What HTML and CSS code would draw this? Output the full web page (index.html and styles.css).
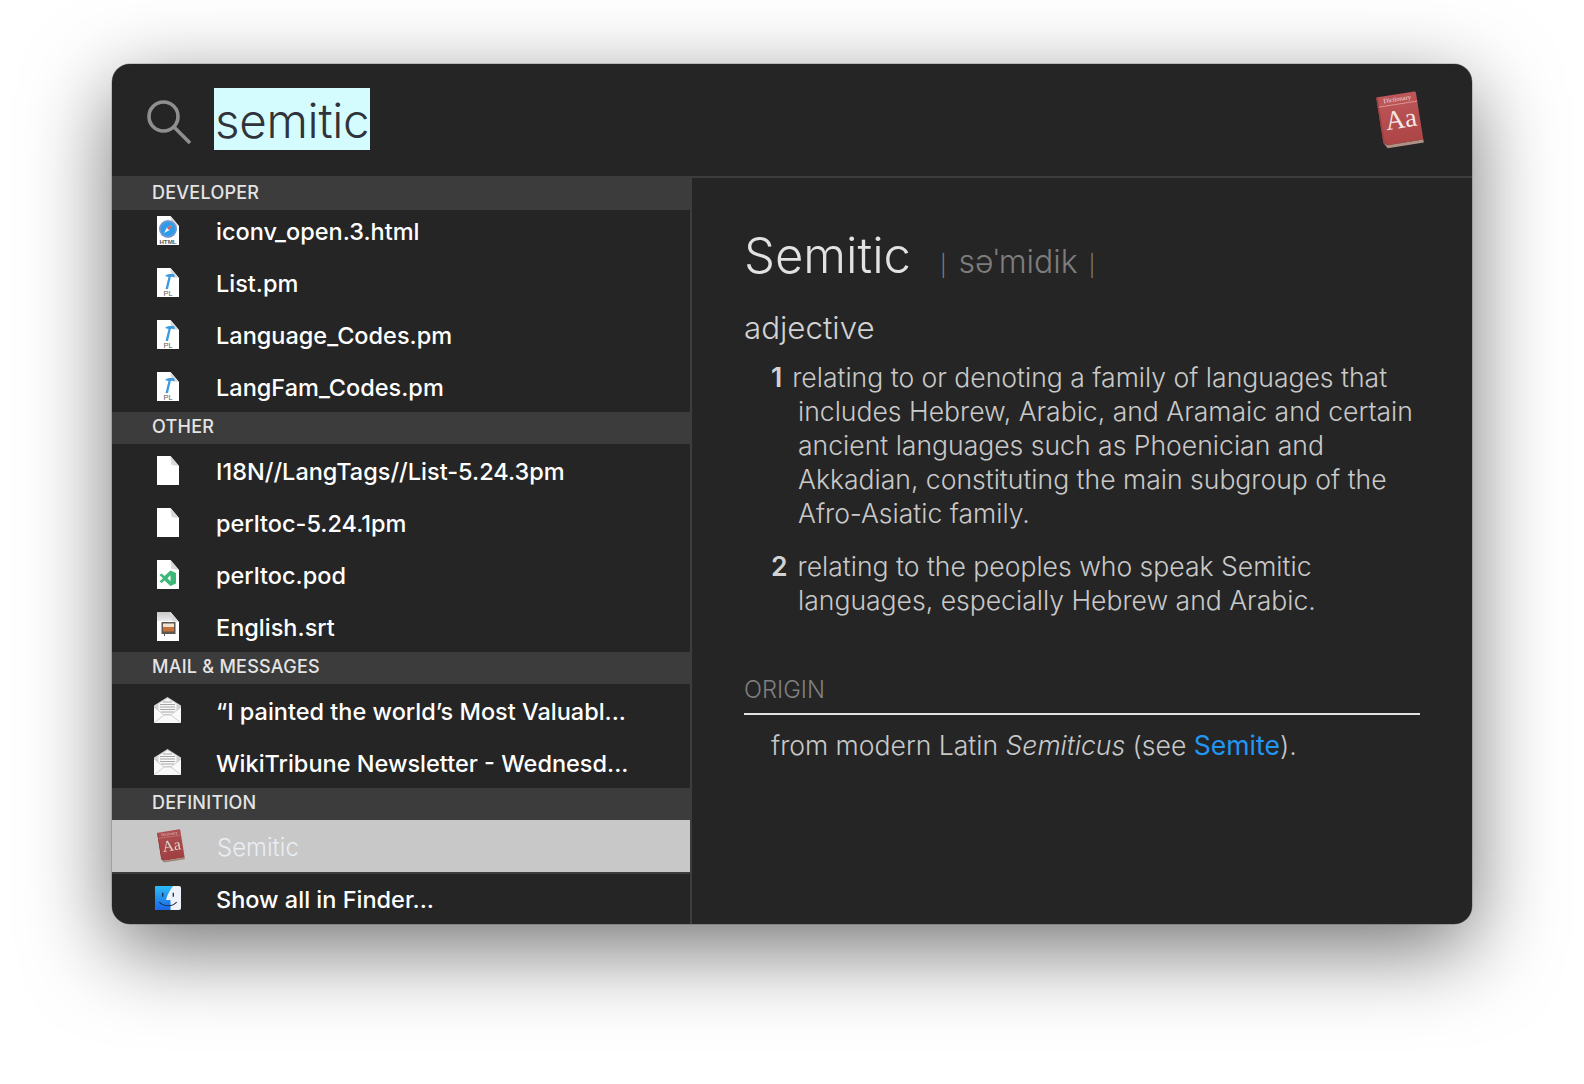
FILE: index.html
```html
<!DOCTYPE html>
<html lang="en">
<head>
<meta charset="utf-8">
<title>Spotlight</title>
<link rel="stylesheet" href="styles.css">
</head>
<body>
<svg class="defs" width="0" height="0" aria-hidden="true">
  <defs>
    <linearGradient id="bookFill" x1="0" y1="0" x2="0" y2="1"><stop offset="0" stop-color="#bd5759"/><stop offset="1" stop-color="#ad4547"/></linearGradient>
    <linearGradient id="finderBlue" x1="0" y1="0" x2="0" y2="1"><stop offset="0" stop-color="#2bbcf8"/><stop offset="1" stop-color="#1a66e6"/></linearGradient>
    <linearGradient id="srtTop" x1="0" y1="0" x2="0" y2="1"><stop offset="0" stop-color="#c8c8c8"/><stop offset="1" stop-color="#ececec"/></linearGradient>
    <symbol id="doc" viewBox="0 0 22 29"><path d="M0 0H13.500L22 10V29H0Z" fill="#fff"/><path d="M13.500 0L14.500 9L22 10Z" fill="#d8d8d8"/></symbol>
    <symbol id="hammer" viewBox="0 0 22 29">
      <path d="M8 8C10 6 14 5.500 17.500 6.500L17.500 9.500C16 8.500 15 8.500 13.800 9L11 21H8.500L11.500 9C10.500 8.500 9 8.500 8 8Z" fill="#3a9ce0"/>
      <text x="11" y="27.500" text-anchor="middle" class="doc-label">PL</text>
    </symbol>
    <symbol id="book" viewBox="0 0 48 58">
      <g transform="rotate(-9 24 29)">
        <path d="M5.500 3H42.500A1.500 1.500 0 0 1 44 4.500V52H8L4 49V4.500A1.500 1.500 0 0 1 5.500 3Z" fill="url(#bookFill)"/>
        <path d="M4 49L8 52H44V55H7.500Z" fill="#b09285"/>
        <path d="M4 3V49L8 52V50L5.500 48V3Z" fill="#a04043"/>
        <path d="M5 13H44" stroke="#e0a09e" stroke-width=".8"/>
        <text x="24.500" y="10" text-anchor="middle" class="book-small">Dictionary</text>
        <text x="25" y="37" text-anchor="middle" class="book-big">Aa</text>
      </g>
    </symbol>
    <symbol id="envelope" viewBox="0 0 27 26">
      <path d="M0 8.500L13.500 0L27 8.500V26H0Z" fill="#d2d2d2"/>
      <path d="M13.500 1.500L22.500 7V18H4.500V7Z" fill="#f8f8f8"/>
      <path d="M9 5H18M6 7.500H21M6 10H21M6 12.500H21M7 15H20" stroke="#a6a6a6" stroke-width="1"/>
      <path d="M0 10L9.500 17.500H17.500L27 10V26H0Z" fill="#f9f9f9"/>
      <path d="M0 26L10 18H17L27 26M0 10L9.500 17.500H17.500L27 10" stroke="#c4c4c4" stroke-width=".8" fill="none"/>
    </symbol>
  </defs>
</svg>
<main class="window">
  <header class="search">
    <svg class="search-icon" viewBox="0 0 44 44" aria-hidden="true"><circle cx="16.500" cy="16.500" r="14.500" fill="none" stroke="#8f8f8f" stroke-width="3.600"/><path d="M27 27L43 43" stroke="#8f8f8f" stroke-width="3.600"/></svg>
    <span class="query">semitic</span>
    <svg class="search-book" aria-hidden="true"><use href="#book"/></svg>
  </header>
  <div class="panels">
    <section class="results">
      <h2 class="group-title">DEVELOPER</h2>
      <div class="row row-first">
        <svg class="file-icon" viewBox="0 0 22 29" aria-hidden="true">
          <use href="#doc" width="22" height="29"/>
          <circle cx="11" cy="13" r="9" fill="#6d97d0"/><circle cx="11" cy="13" r="7" fill="#2b9cec"/><path d="M15 9L12.300 14.300L7 17L9.800 11.700Z" fill="#f3f3f3"/><path d="M15 9L12.300 14.300L9.800 11.700Z" fill="#e2574c"/>
          <text x="11" y="27.500" text-anchor="middle" class="doc-label doc-label-small">HTML</text>
        </svg>
        <span>iconv_open.3.html</span>
      </div>
      <div class="row"><svg class="file-icon" viewBox="0 0 22 29" aria-hidden="true"><use href="#doc" width="22" height="29"/><use href="#hammer" width="22" height="29"/></svg><span>List.pm</span></div>
      <div class="row"><svg class="file-icon" viewBox="0 0 22 29" aria-hidden="true"><use href="#doc" width="22" height="29"/><use href="#hammer" width="22" height="29"/></svg><span>Language_Codes.pm</span></div>
      <div class="row"><svg class="file-icon" viewBox="0 0 22 29" aria-hidden="true"><use href="#doc" width="22" height="29"/><use href="#hammer" width="22" height="29"/></svg><span>LangFam_Codes.pm</span></div>
      <h2 class="group-title">OTHER</h2>
      <div class="row"><svg class="file-icon" viewBox="0 0 22 29" aria-hidden="true"><use href="#doc" width="22" height="29"/></svg><span>I18N//LangTags//List-5.24.3pm</span></div>
      <div class="row"><svg class="file-icon" viewBox="0 0 22 29" aria-hidden="true"><use href="#doc" width="22" height="29"/></svg><span>perltoc-5.24.1pm</span></div>
      <div class="row">
        <svg class="file-icon" viewBox="0 0 22 29" aria-hidden="true">
          <use href="#doc" width="22" height="29"/>
          <path fill-rule="evenodd" d="M13.500 10.500L19 13V23.500L13.500 26L7.500 20.500L4.500 23L2.500 21.500L6 18.200L2.500 15L4.500 13.500L7.500 16ZM13.500 15.200L10.500 18.200L13.500 21.200Z" fill="#3cb878"/>
        </svg>
        <span>perltoc.pod</span>
      </div>
      <div class="row">
        <svg class="file-icon" viewBox="0 0 22 29" aria-hidden="true">
          <use href="#doc" width="22" height="29"/>
          <path d="M0 0H13.500L14.500 9H0Z" fill="url(#srtTop)"/>
          <rect x="4.500" y="10" width="14" height="12" fill="#5d5750"/><rect x="6" y="11.500" width="11" height="3.500" fill="#f2e4d2"/><rect x="6" y="15" width="11" height="4.500" fill="#c9703a"/><rect x="7" y="22" width="1" height="2" fill="#5d5750"/>
        </svg>
        <span>English.srt</span>
      </div>
      <h2 class="group-title">MAIL &amp; MESSAGES</h2>
      <div class="row"><svg class="mail-icon" aria-hidden="true"><use href="#envelope"/></svg><span>“I painted the world’s Most Valuabl...</span></div>
      <div class="row"><svg class="mail-icon" aria-hidden="true"><use href="#envelope"/></svg><span>WikiTribune Newsletter - Wednesd...</span></div>
      <h2 class="group-title">DEFINITION</h2>
      <div class="row row-selected"><svg class="row-book" aria-hidden="true"><use href="#book"/></svg><span>Semitic</span></div>
      <div class="row row-last">
        <svg class="finder-icon" viewBox="0 0 26 24" aria-hidden="true">
          <rect width="26" height="24" rx="2" fill="#eef2f9"/>
          <path d="M2 0H18C15 4 12 9 11 14H15.500V24H2A2 2 0 0 1 0 22V2A2 2 0 0 1 2 0Z" fill="url(#finderBlue)"/>
          <path d="M7.700 6.700V10.700M18.300 6.700V10.700" stroke="#1d2c44" stroke-width="1.300"/>
          <path d="M4.300 16C8 20.500 17 21.500 21.700 16" stroke="#1d2c44" stroke-width="1.100" fill="none"/>
        </svg>
        <span>Show all in Finder...</span>
      </div>
    </section>
    <article class="definition">
      <h1 class="headword">Semitic<span class="pron"><span class="bar bar-open">|</span>səˈmidik<span class="bar bar-close">|</span></span></h1>
      <p class="pos">adjective</p>
      <ol class="senses">
        <li class="sense"><b class="num">1</b>relating to or denoting a family of languages that<br>includes Hebrew, Arabic, and Aramaic and certain<br>ancient languages such as Phoenician and<br>Akkadian, constituting the main subgroup of the<br>Afro-Asiatic family.</li>
        <li class="sense"><b class="num">2</b>relating to the peoples who speak Semitic<br>languages, especially Hebrew and Arabic.</li>
      </ol>
      <h3 class="origin-title">ORIGIN</h3>
      <p class="origin">from modern Latin <em>Semiticus</em> (see <a class="link">Semite</a>).</p>
    </article>
  </div>
</main>
</body>
</html>
```
FILE: styles.css
```css
* { box-sizing: border-box; }
html, body { margin: 0; height: 100%; }
body {
  background: #fff;
  padding: 64px 112px;
  font-family: Inter, "Noto Sans", "Liberation Sans", sans-serif;
  overflow: hidden;
}
.defs { position: absolute; }
.doc-label { font: 400 7.500px "Liberation Sans", sans-serif; fill: #5a5a5a; }
.doc-label-small { font-size: 6.200px; font-weight: 700; }
.book-small { font: 6.500px "Liberation Serif", serif; fill: #f3dedc; }
.book-big { font: 27px "Liberation Serif", serif; fill: #f4e6e2; }

.window {
  width: 1360px;
  height: 860px;
  background: #252525;
  border-radius: 18px;
  box-shadow: 0 0 0 .5px rgba(0,0,0,.3), 0 25px 85px rgba(0,0,0,.55);
  overflow: hidden;
  display: flex;
  flex-direction: column;
  color: #fff;
}
.search {
  height: 112px;
  flex: none;
  display: flex;
  align-items: center;
  padding-left: 35px;
}
.search-icon { width: 44px; height: 44px; flex: none; margin-right: 23px; margin-top: 4px; }
.query {
  background: #d4fcff;
  color: #30343a;
  font-size: 47.500px;
  font-weight: 300;
  height: 62px;
  line-height: 65px;
  padding: 0 1px;
  letter-spacing: -.3px;
  margin-top: -2px;
}
.search-book { width: 48px; height: 58px; flex: none; margin-left: auto; margin-right: 48px; margin-top: -1px; }

.panels { flex: 1; display: flex; min-height: 0; border-top: 2px solid #3d3d3d; }
.results { width: 580px; flex: none; border-right: 2px solid #3d3d3d; display: flex; flex-direction: column; }
.group-title {
  margin: 0;
  height: 32px;
  flex: none;
  background: #3c3c3c;
  color: #e4e4e4;
  font-size: 18px;
  font-weight: 500;
  line-height: 30px;
  letter-spacing: .25px;
  padding-left: 40px;
}
.row {
  height: 52px;
  flex: none;
  display: flex;
  align-items: center;
  padding-left: 45px;
  font-size: 23.500px;
  font-weight: 500;
  color: #fff;
}
.row span { padding-top: 2px; }
.row-first { height: 46px; padding-bottom: 6px; }
.row-selected { background: #c8c8c8; color: #e8eef4; font-weight: 300; font-size: 24px; }
.row-last { height: 52px; border-top: 2px solid #3d3d3d; padding-bottom: 2px; }
.file-icon { width: 22px; height: 29px; flex: none; margin-right: 37px; }
.mail-icon { width: 27px; height: 26px; flex: none; margin: 0 35px 0 -3px; }
.row-book { width: 28px; height: 34px; flex: none; margin: 0 32px 0 0; filter: brightness(.92); }
.finder-icon { width: 26px; height: 24px; flex: none; margin: 0 35px 0 -2px; }

.definition { flex: 1; padding: 46px 52px 0; color: #c9c9c9; font-weight: 300; }
.headword { margin: 0; font-size: 49px; font-weight: 300; color: #e2e2e2; line-height: 64px; }
.pron { font-size: 32px; color: #7d7d7d; margin-left: 29px; font-weight: 300; }
.bar { font-size: 21px; font-weight: 300; }
.bar-open { margin-right: 12px; }
.bar-close { margin-left: 11px; }
.pos { margin: 8px 0 0; font-size: 31.300px; line-height: 44px; color: #d2d2d2; }
.senses { list-style: none; margin: 10px 0 0; padding: 0; }
.sense { font-size: 26.550px; line-height: 34px; padding-left: 54px; margin-bottom: 19px; white-space: nowrap; }
.num { font-weight: 600; color: #d2d2d2; display: inline-block; margin-left: -27px; margin-right: 10px; }
.origin-title {
  margin: 55px 0 0;
  font-size: 23.700px;
  font-weight: 300;
  color: #7f7f7f;
  line-height: 36px;
  border-bottom: 2px solid #e2e2e2;
  padding-bottom: 5px;
}
.origin { margin: 13px 0 0 27px; font-size: 26.550px; line-height: 34px; }
.link { color: #2196f3; font-weight: 400; }
```
